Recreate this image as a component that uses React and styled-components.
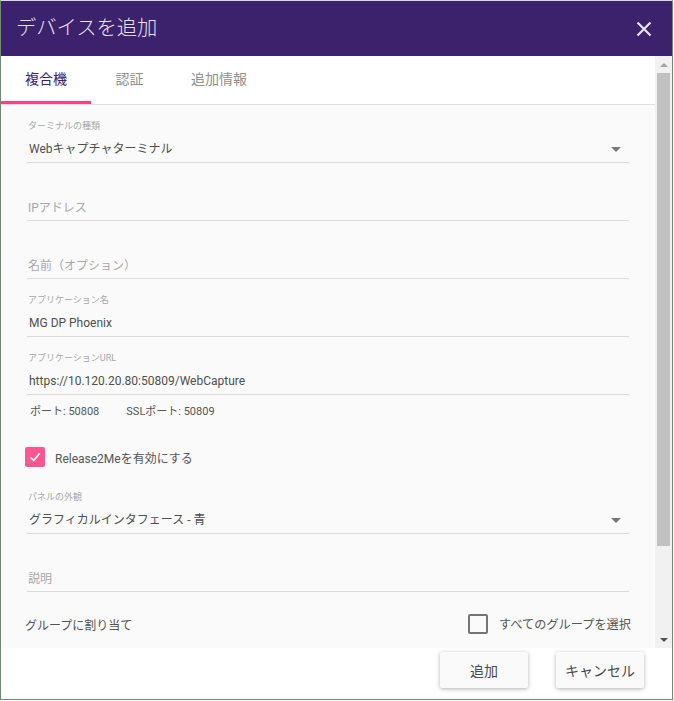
import React from 'react';
import styled, {createGlobalStyle} from 'styled-components';

const Global = createGlobalStyle`
  html, body {
    margin: 0;
    padding: 0;
    background: #fff;
  }
  body {
    font-family: Roboto, "Noto Sans CJK JP", sans-serif;
  }
`;

const Dialog = styled.div`
  box-sizing: border-box;
  width: 673px;
  height: 700px;
  display: flex;
  flex-direction: column;
  background: #fff;
  border: 1px solid #6f8a6f;
  border-top-color: #d8dcd8;
  overflow: hidden;
`;

const Header = styled.div`
  flex: none;
  height: 55px;
  display: flex;
  align-items: center;
  justify-content: space-between;
  padding: 0 20px 0 15px;
  background: #3c216d;
  color: #e6e2ee;
`;

const Title = styled.div`
  font-size: 20.3px;
  font-weight: 300;
  margin-bottom: 5px;
`;

const Body = styled.div`
  flex: none;
  height: 592px;
  display: flex;
`;

const Main = styled.div`
  flex: 1;
  min-width: 0;
  display: flex;
  flex-direction: column;
`;

const Tabs = styled.div`
  flex: none;
  height: 48px;
  display: flex;
  border-bottom: 1px solid #e0e0e0;
  background: #fff;
`;

const Tab = styled.div`
  box-sizing: border-box;
  width: ${props => props.width}px;
  height: 48px;
  padding-bottom: 2px;
  display: flex;
  align-items: center;
  justify-content: center;
  font-size: 14px;
  color: ${props => props.active ? '#3c216d' : '#8f8f8f'};
  border-bottom: 3px solid ${props => props.active ? '#ff4081' : 'transparent'};
`;

const Content = styled.div`
  flex: 1;
  background: #fafafa;
  padding: 0 26px 0 23px;
  overflow: hidden;
`;

const Field = styled.div`
  box-sizing: border-box;
  height: 58px;
  margin-left: 3px;
  display: flex;
  flex-direction: column;
  justify-content: flex-end;
  border-bottom: 1px solid #dcdcdc;
  position: relative;
`;

const FieldLabel = styled.div`
  font-size: 9px;
  line-height: 12px;
  color: #a8a8a8;
  margin: 0 0 8px 1px;
`;

const Value = styled.div`
  font-size: 12px;
  line-height: 18px;
  color: #4f4f4f;
  margin: 0 0 4px 2px;
`;

const Placeholder = styled.div`
  font-size: 12px;
  line-height: 18px;
  color: #a8a8a8;
  margin: 0 0 3px 1px;
`;

const Caret = styled.div`
  position: absolute;
  right: 8px;
  bottom: 10px;
  width: 0;
  height: 0;
  border-left: 5px solid transparent;
  border-right: 5px solid transparent;
  border-top: 5px solid #757575;
`;

const Ports = styled.div`
  display: flex;
  gap: 27px;
  margin: 9px 0 0 6px;
  font-size: 11px;
  line-height: 16px;
  color: #555;
`;

const CheckRow = styled.div`
  display: flex;
  align-items: center;
  gap: ${props => props.gap}px;
  font-size: ${props => props.size}px;
  color: #555;
`;

const Release = styled(CheckRow)`
  margin: 27px 0 9px 1px;
`;

const Box = styled.div`
  box-sizing: border-box;
  width: 20px;
  height: 20px;
  display: flex;
  align-items: center;
  justify-content: center;
  border-radius: 2px;
  background: ${props => props.checked ? '#ff5591' : 'transparent'};
  border: ${props => props.checked ? 'none' : '2px solid #757575'};
`;

const GroupRow = styled.div`
  display: flex;
  align-items: center;
  justify-content: space-between;
  margin: 22px -2px 0 1px;
  font-size: 12px;
  color: #555;
`;

const Scrollbar = styled.div`
  flex: none;
  width: 17px;
  display: flex;
  flex-direction: column;
  align-items: center;
  background: #f1f1f1;
`;

const ScrollArrow = styled.div`
  flex: none;
  height: 17px;
  display: flex;
  align-items: center;
  justify-content: center;
  &::after {
    content: '';
    border-left: 4px solid transparent;
    border-right: 4px solid transparent;
    border-${props => props.up ? 'bottom' : 'top'}: 4px solid ${props => props.up ? '#a3a3a3' : '#505050'};
  }
`;

const Thumb = styled.div`
  flex: none;
  width: 13px;
  height: 473px;
  background: #c1c1c1;
`;

const Spacer = styled.div`
  flex: 1;
`;

const Footer = styled.div`
  flex: 1;
  display: flex;
  justify-content: flex-end;
  gap: 28px;
  padding: 4px 28px 0 0;
  background: #fff;
`;

const Button = styled.button`
  box-sizing: border-box;
  width: 88px;
  height: 36px;
  padding: 0;
  border: none;
  border-radius: 2px;
  background: #fafafa;
  font-family: inherit;
  font-size: 14px;
  color: #4a4a4a;
  box-shadow: 0 1px 4px rgba(0, 0, 0, 0.3);
`;

export default function App() {
    return (
        <Dialog>
            <Global/>
            <Header>
                <Title>デバイスを追加</Title>
                <svg width="16" height="16" viewBox="0 0 16 16">
                    <path d="M1.5 1.5L14.5 14.5M14.5 1.5L1.5 14.5" stroke="#e6e2ee" strokeWidth="2.2"/>
                </svg>
            </Header>
            <Body>
                <Main>
                    <Tabs>
                        <Tab active width={90}>複合機</Tab>
                        <Tab width={77}>認証</Tab>
                        <Tab width={102}>追加情報</Tab>
                    </Tabs>
                    <Content>
                        <Field>
                            <FieldLabel>ターミナルの種類</FieldLabel>
                            <Value>Webキャプチャターミナル</Value>
                            <Caret/>
                        </Field>
                        <Field><Placeholder>IPアドレス</Placeholder></Field>
                        <Field><Placeholder>名前（オプション）</Placeholder></Field>
                        <Field>
                            <FieldLabel>アプリケーション名</FieldLabel>
                            <Value>MG DP Phoenix</Value>
                        </Field>
                        <Field>
                            <FieldLabel>アプリケーションURL</FieldLabel>
                            <Value>https://10.120.20.80:50809/WebCapture</Value>
                        </Field>
                        <Ports>
                            <span>ポート: 50808</span>
                            <span>SSLポート: 50809</span>
                        </Ports>
                        <Release gap={10} size={12}>
                            <Box checked>
                                <svg width="14" height="14" viewBox="0 0 14 14">
                                    <path d="M2.5 7.5L5.8 10.5L11.5 3.5" fill="none" stroke="#fff" strokeWidth="1.8"/>
                                </svg>
                            </Box>
                            Release2Meを有効にする
                        </Release>
                        <Field>
                            <FieldLabel>パネルの外観</FieldLabel>
                            <Value>グラフィカルインタフェース - 青</Value>
                            <Caret/>
                        </Field>
                        <Field><Placeholder>説明</Placeholder></Field>
                        <GroupRow>
                            グループに割り当て
                            <CheckRow gap={11} size={12.2}>
                                <Box/>
                                すべてのグループを選択
                            </CheckRow>
                        </GroupRow>
                    </Content>
                </Main>
                <Scrollbar>
                    <ScrollArrow up/>
                    <Thumb/>
                    <Spacer/>
                    <ScrollArrow/>
                </Scrollbar>
            </Body>
            <Footer>
                <Button>追加</Button>
                <Button>キャンセル</Button>
            </Footer>
        </Dialog>
    );
}
